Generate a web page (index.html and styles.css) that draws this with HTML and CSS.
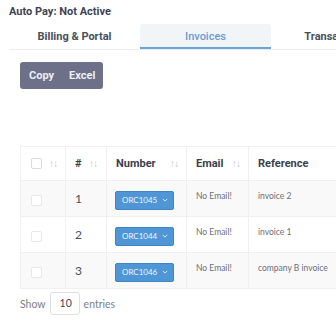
FILE: index.html
```html
<!DOCTYPE html>
<html lang="en">
<head>
    <meta charset="UTF-8">
    <meta name="viewport" content="width=device-width, initial-scale=1.0">
    <title>Invoices</title>
    <link rel="stylesheet" href="styles.css">
</head>
<body>
    <div class="autopay">Auto Pay: Not Active</div>

    <div class="tabs">
        <div class="tab">Billing &amp; Portal</div>
        <div class="tab active">Invoices</div>
        <div class="tab">Transactions</div>
    </div>

    <div class="content">
        <div class="btn-group">
            <span class="btn">Copy</span>
            <span class="btn">Excel</span>
        </div>

        <table class="invoices">
            <colgroup>
                <col class="col-check">
                <col class="col-num">
                <col class="col-number">
                <col class="col-email">
                <col class="col-ref">
            </colgroup>
            <thead>
                <tr>
                    <th><div class="th-in"><span class="check"></span><span class="sort">&#8593;&#8595;</span></div></th>
                    <th><div class="th-in">#<span class="sort">&#8593;&#8595;</span></div></th>
                    <th><div class="th-in">Number<span class="sort">&#8593;&#8595;</span></div></th>
                    <th><div class="th-in">Email<span class="sort">&#8593;&#8595;</span></div></th>
                    <th><div class="th-in">Reference<span class="sort">&#8593;&#8595;</span></div></th>
                </tr>
            </thead>
            <tbody>
                <tr>
                    <td><span class="check"></span></td>
                    <td class="num">1</td>
                    <td class="number"><span class="inv-btn">ORC1045<svg class="caret" viewBox="0 0 8 5" width="6" height="4"><path d="M1 1l3 3 3-3" fill="none" stroke="currentColor" stroke-width="1.2"/></svg></span></td>
                    <td class="small">No Email!</td>
                    <td class="small">invoice 2</td>
                </tr>
                <tr>
                    <td><span class="check"></span></td>
                    <td class="num">2</td>
                    <td class="number"><span class="inv-btn">ORC1044<svg class="caret" viewBox="0 0 8 5" width="6" height="4"><path d="M1 1l3 3 3-3" fill="none" stroke="currentColor" stroke-width="1.2"/></svg></span></td>
                    <td class="small">No Email!</td>
                    <td class="small">invoice 1</td>
                </tr>
                <tr>
                    <td><span class="check"></span></td>
                    <td class="num">3</td>
                    <td class="number"><span class="inv-btn">ORC1046<svg class="caret" viewBox="0 0 8 5" width="6" height="4"><path d="M1 1l3 3 3-3" fill="none" stroke="currentColor" stroke-width="1.2"/></svg></span></td>
                    <td class="small">No Email!</td>
                    <td class="small">company B invoice</td>
                </tr>
            </tbody>
        </table>

        <div class="length">
            Show <span class="length-box">10</span> entries
        </div>
    </div>
</body>
</html>
```

FILE: styles.css
```css
/* General Styles */
body {
    margin: 0;
    font-family: 'Roboto', sans-serif;
    color: #3f4452;
    background: #fff;
    overflow: hidden;
}

.autopay {
    font-size: 11px;
    font-weight: 700;
    padding: 5px 0 0 9px;
    height: 19px;
    line-height: 14px;
}

/* Tabs */
.tabs {
    display: flex;
    margin-left: 9px;
    height: 25px;
    border-bottom: 1px solid #ececec;
    white-space: nowrap;
}

.tab {
    flex: 0 0 131px;
    text-align: center;
    font-size: 11px;
    font-weight: 700;
    line-height: 26px;
    color: #4a4f5c;
}

.tab.active {
    background: #f2f5f8;
    color: #6a9ad0;
    border-radius: 3px 3px 0 0;
    box-shadow: inset 0 -2px 0 #6aa3dc;
    font-weight: 500;
}

.content {
    padding-left: 20px;
}

/* Buttons */
.btn-group {
    display: inline-flex;
    margin-top: 12px;
    height: 27px;
    background: #6c7088;
    border-radius: 3px;
}

.btn {
    font-size: 11px;
    font-weight: 700;
    line-height: 27px;
    color: #eceef3;
    padding: 0 8px 0 9px;
}

.btn + .btn {
    padding-left: 7px;
}

/* Table */
.invoices {
    margin-top: 57px;
    width: 340px;
    table-layout: fixed;
    border-collapse: collapse;
    border-top: 1px solid #f0f0f0;
}

.col-check { width: 45px; }
.col-num { width: 41px; }
.col-number { width: 80px; }
.col-email { width: 62px; }
.col-ref { width: 112px; }

.invoices thead tr {
    height: 34px;
}

.invoices th {
    text-align: left;
    font-size: 11px;
    font-weight: 700;
    padding: 0 0 0 9px;
    border-right: 1px solid #f0f0f0;
    border-bottom: 1px solid #f0f0f0;
    white-space: nowrap;
    color: #3a3f4c;
}

.invoices th:first-child {
    padding-left: 10px;
    border-left: 1px solid #f0f0f0;
}

.th-in {
    display: flex;
    align-items: center;
    justify-content: space-between;
    padding-right: 8px;
}

.invoices th:nth-child(2) .th-in {
    padding-right: 9px;
}

.sort {
    font-size: 10px;
    font-weight: 400;
    color: #c2c6ce;
    letter-spacing: -1px;
}

.invoices tbody tr {
    height: 36px;
}

.invoices td {
    padding: 0 0 0 9px;
    border-right: 1px solid #f0f0f0;
    border-bottom: 1px solid #f0f0f0;
    white-space: nowrap;
    font-family: 'Lato', sans-serif;
}

.invoices td:first-child {
    padding-left: 10px;
    border-left: 1px solid #f0f0f0;
}

.invoices td.number {
    padding-left: 8px;
}

.invoices tbody tr:nth-child(odd) {
    background: #f9f9f9;
}

.check {
    display: inline-block;
    width: 9px;
    height: 9px;
    border: 1px solid #d8dbe0;
    border-radius: 2px;
    background: #fff;
    vertical-align: middle;
}

.invoices tbody .check {
    border-color: #e6e8ec;
}

.num {
    font-size: 12px;
    color: #4a4f5c;
}

.inv-btn {
    display: inline-flex;
    align-items: center;
    height: 17px;
    padding: 0 5px 0 6px;
    background: #4e96d6;
    border: 1px solid #3f84c4;
    border-radius: 2px;
    color: #eef5fc;
    font-size: 8px;
}

.caret {
    margin-left: 5px;
}

.small {
    vertical-align: top;
    padding-top: 10px !important;
    font-size: 8.5px;
    color: #6b6f78;
}

/* Footer */
.length {
    display: flex;
    align-items: center;
    margin-top: 3px;
    font-family: 'Lato', sans-serif;
    font-size: 10.5px;
    color: #7b7f88;
}

.length-box {
    display: inline-block;
    width: 19px;
    height: 21px;
    line-height: 21px;
    margin: 0 4px;
    padding-left: 9px;
    border: 1px solid #dcdfe4;
    border-radius: 3px;
    color: #3f4452;
}
```
